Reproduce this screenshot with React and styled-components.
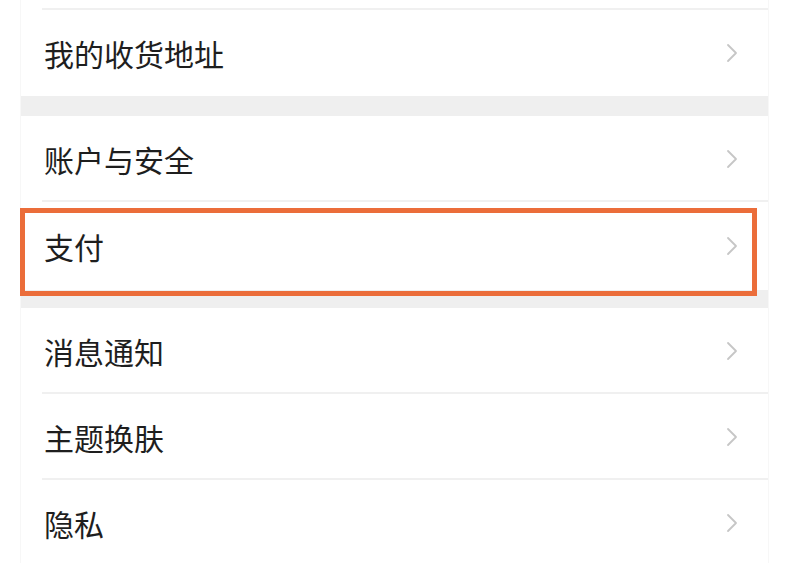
import React from "react";
import styled, { createGlobalStyle } from "styled-components";

const GlobalStyle = createGlobalStyle`
	html, body {
		margin: 0;
		padding: 0;
		background: #ffffff;
		overflow: hidden;
	}
	body {
		font-family: "Noto Sans CJK SC", "Noto Sans", sans-serif;
	}
`;

const groups = [
	{ items: [{ label: "我的收货地址" }] },
	{ items: [{ label: "账户与安全" }, { label: "支付", highlighted: true }] },
	{ items: [{ label: "消息通知" }, { label: "主题换肤" }, { label: "隐私" }] }
];

const Chevron = () => (
	<svg width="12" height="20" viewBox="0 0 12 20" fill="none">
		<polyline
			points="2,2 10,10 2,18"
			stroke="#c6c6c6"
			strokeWidth="1.8"
			strokeLinecap="round"
			strokeLinejoin="round"
		/>
	</svg>
);

const App = () => (
	<Page>
		<GlobalStyle />
		<Panel>
			<TopStub>
				<RowInner $divider />
			</TopStub>
			{groups.map((group, gi) => (
				<React.Fragment key={gi}>
					{gi > 0 && <Band $height={gi === 1 ? 20 : 18} />}
					{group.items.map((item, i) => {
						const last = i === group.items.length - 1;
						return (
							<Row key={item.label} $tall={item.highlighted}>
								<RowInner $divider={!last}>
									<Label>{item.label}</Label>
									<Chevron />
								</RowInner>
								{item.highlighted && <Highlight />}
							</Row>
						);
					})}
				</React.Fragment>
			))}
		</Panel>
	</Page>
);

const Page = styled.div`
	width: 796px;
	height: 563px;
	overflow: hidden;
	padding-left: 20px;
	box-sizing: border-box;
`;

const Panel = styled.div`
	width: 749px;
	box-sizing: border-box;
	border-left: 1px solid #f7f7f7;
	border-right: 1px solid #f7f7f7;
	background: #ffffff;
`;

const TopStub = styled.div`
	height: 10px;
	padding-left: 21px;
	display: flex;
`;

const Row = styled.div`
	position: relative;
	height: ${props => (props.$tall ? 88 : 86)}px;
	padding-left: 21px;
	display: flex;
`;

const RowInner = styled.div`
	flex: 1;
	display: flex;
	align-items: center;
	justify-content: space-between;
	padding: 2px 30px 0 2px;
	border-bottom: 2px solid ${props => (props.$divider ? "#f0f0f0" : "transparent")};
`;

const Label = styled.span`
	font-size: 30px;
	color: #1e1e1e;
	letter-spacing: 0;
`;

const Band = styled.div`
	height: ${props => props.$height}px;
	background: #efefef;
`;

const Highlight = styled.div`
	position: absolute;
	top: 6px;
	left: -1px;
	width: 737px;
	height: 88px;
	box-sizing: border-box;
	border: 5px solid #eb6d3a;
	pointer-events: none;
`;

export default App;
